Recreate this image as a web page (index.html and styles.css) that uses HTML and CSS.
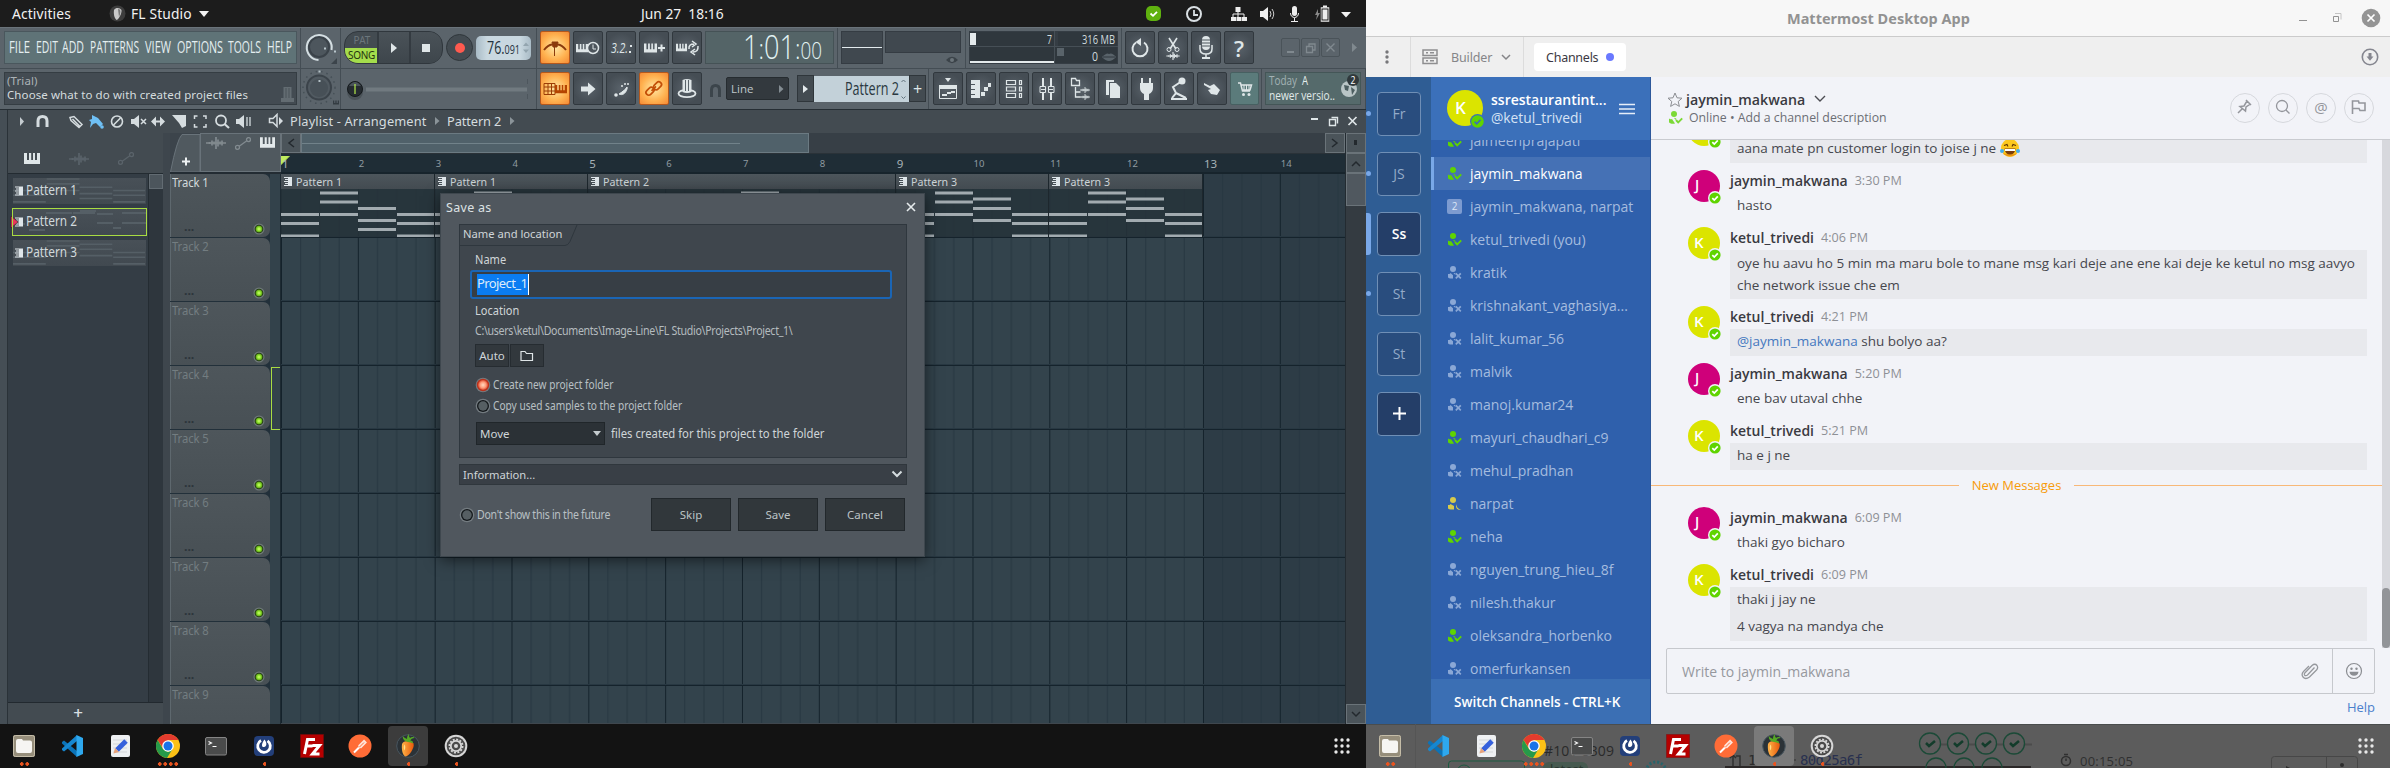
FILE: index.html
```html
<!DOCTYPE html>
<html lang="en">
<head>
<meta charset="utf-8">
<title>Desktop</title>
<link rel="stylesheet" href="styles.css">
</head>
<body>
<svg class="defs" width="0" height="0">
  <defs>
    <radialGradient id="ledGreen"><stop offset="0" stop-color="#d0ff70"/><stop offset=".55" stop-color="#8be02a"/><stop offset="1" stop-color="#4f8a16"/></radialGradient>
    <radialGradient id="ledRed"><stop offset="0" stop-color="#ffd9c2"/><stop offset=".6" stop-color="#ff9a78"/><stop offset="1" stop-color="#d8492f"/></radialGradient>
    <linearGradient id="carrot" x1="0" x2="1"><stop offset="0" stop-color="#ffb347"/><stop offset="1" stop-color="#e8590c"/></linearGradient>
    <pattern id="bars" width="76.83" height="64" patternUnits="userSpaceOnUse">
      <path d="M19.7 0v64M38.9 0v64M58.1 0v64" stroke="#263640"/>
      <path d="M.5 0v64" stroke="#14222b"/>
      <path d="M0 62.5h77" stroke="#283842"/><path d="M0 63.5h77" stroke="#15232c"/>
    </pattern>
  </defs>
  <symbol id="piano" viewBox="0 0 16 11"><path fill="currentColor" d="M0 0h3v7h2V0h2.200v7h1.800V0h2v7h2V0h3v11H0z"/></symbol>
  <symbol id="wave" viewBox="0 0 20 12"><path d="M0 6h20M3.500 5v2M6 3.500v5M8 4.500v3M10 0v12M12 2.500v7M14 4.500v3M16 3.500v5" stroke="currentColor" stroke-width="1.700" fill="none"/></symbol>
  <symbol id="auto" viewBox="0 0 16 13"><g fill="none" stroke="currentColor" stroke-width="1.300"><circle cx="2.500" cy="10.300" r="2"/><circle cx="13.500" cy="2.600" r="2"/><path d="M4.200 9.200l7.600-5.400"/></g></symbol>
  <symbol id="clipicon" viewBox="0 0 8 9"><path fill="#dfe6ea" d="M0 0h8v9H0V8h4V7H1V6h3V5H0V4h4V3H1V2h3V1H0z"/></symbol>
  <symbol id="led" viewBox="0 0 12 12"><circle cx="6" cy="6" r="5.500" fill="#6f7b78"/><circle cx="6" cy="6" r="4.300" fill="#1c2c14"/><circle cx="6" cy="6" r="3.500" fill="url(#ledGreen)"/></symbol>
  <symbol id="ledoff" viewBox="0 0 16 16"><circle cx="8" cy="8" r="7.300" fill="#737b80"/><circle cx="8" cy="8" r="6" fill="#14191c"/><circle cx="8" cy="8" r="4.700" fill="#565f63"/></symbol>
  <symbol id="ledon" viewBox="0 0 16 16"><circle cx="8" cy="8" r="7.300" fill="#737b80"/><circle cx="8" cy="8" r="6.200" fill="#b9321c"/><circle cx="8" cy="8" r="5" fill="url(#ledRed)"/></symbol>
  <symbol id="notes1" viewBox="0 0 154 49" preserveAspectRatio="none"><path fill="currentColor" d="M0 22h38v3H0zM0 31h38v3H0zM0 43.500h38v3H0zM39 .5h38v3H39zM39 9.500h38v3H39zM39 22h38v3H39zM77 16h38v3H77zM77 28h38v3H77zM77 37h38v3H77zM116 22h37v3h-37zM116 31h37v3h-37zM116 43.500h37v3h-37z"/></symbol>
  <symbol id="notes3" viewBox="0 0 154 49" preserveAspectRatio="none"><path fill="currentColor" d="M0 22h38v3H0zM0 31h38v3H0zM0 43.500h38v3H0zM39 .5h38v3H39zM39 9.500h38v3H39zM39 22h38v3H39zM77 6.500h38v3H77zM77 16h38v3H77zM77 28h38v3H77zM116 22h37v3h-37zM116 31h37v3h-37zM116 43.500h37v3h-37z"/></symbol>
  <symbol id="online" viewBox="0 0 14 13"><circle cx="5" cy="3" r="3" fill="currentColor"/><path fill="currentColor" d="M0 7.500c1 .8 2 1 3 .4l3 4.600c-2 .6-6 .2-6-1.500zM5 6.800l2.400.6-1 1.500z"/><path d="M7 9l2.200 2.300 4-4" fill="none" stroke="currentColor" stroke-width="1.900"/></symbol>
  <symbol id="offline" viewBox="0 0 14 13"><circle cx="5" cy="3" r="3" fill="currentColor"/><path fill="currentColor" d="M0 8c1.500.3 2-.3 2.500-1l2.500 2.300V12.500C2 12.600 0 12.300 0 11zM5.500 7h1.800v2z"/><path d="M7.800 7.300l5 5M12.800 7.300l-5 5" fill="none" stroke="currentColor" stroke-width="1.700"/></symbol>
  <symbol id="away" viewBox="0 0 14 13"><circle cx="5" cy="3" r="3" fill="currentColor"/><path fill="currentColor" d="M0 8c1.500.3 2-.3 2.500-1l3.500 2V12.500C2 12.600 0 12.300 0 11zM9 6.500c-1 3 .5 6 4.500 5.800-2 1-5.500.5-5.500-3z"/></symbol>
  <symbol id="okbadge" viewBox="0 0 14 14"><circle cx="7" cy="7" r="7" fill="#f2f3f8"/><circle cx="7" cy="7" r="5.600" fill="#5fd400"/><path d="M4.300 7.100l2 2 3.500-3.700" fill="none" stroke="#fff" stroke-width="1.700"/></symbol>
  <symbol id="i-files" viewBox="0 0 24 24"><rect x="1" y="1" width="22" height="22" rx="2" fill="#968e7b"/><rect x="1.500" y="1.500" width="21" height="21" rx="2" fill="none" stroke="#c5bda8"/><path fill="#f6f5f2" d="M4 7q0-2 2-2h4l1 1.500h7q2 0 2 2V17q0 2-2 2H6q-2 0-2-2z"/></symbol>
  <symbol id="i-code" viewBox="0 0 24 24"><path fill="#0b73b8" d="M2 8l2-1.500L17 17v6L2 9.500z"/><path fill="#1687d0" d="M2 16l2 1.500L17 7V1L2 14.500z"/><path fill="#2ea8ee" d="M16.500 1L23 4v16l-6.500 3z"/></symbol>
  <symbol id="i-edit" viewBox="0 0 24 24"><rect x="3" y="1" width="19" height="22" rx="2" fill="#eef0f2"/><path d="M5 6h14M5 10h14M5 14h14M5 18h14" stroke="#d3d6d9"/><path d="M9 16L18 7" stroke="#3560dc" stroke-width="5"/><path fill="#e7a27a" d="M7 14l4 4-5.500 1.500z"/></symbol>
  <symbol id="i-chrome" viewBox="0 0 24 24"><circle cx="12" cy="12" r="12" fill="#fbc116"/><path fill="#e33b2e" d="M1.600 6A12 12 0 0122.400 6H12L7 14z"/><path fill="#269a4a" d="M1.600 6A12 12 0 0011 24l5.500-9-4.500 3-5-3z"/><circle cx="12" cy="12" r="5.800" fill="#fff"/><circle cx="12" cy="12" r="4.500" fill="#1a73e8"/></symbol>
  <symbol id="i-term" viewBox="0 0 24 24"><rect x="1.500" y="3.500" width="21" height="17.500" rx="1.500" fill="#4a4b4b" stroke="#858585"/><path d="M4.500 7.500l3 1.500-3 1.500M8.500 12.500h4" fill="none" stroke="#fff" stroke-width="1.100"/></symbol>
  <symbol id="i-matter" viewBox="0 0 24 24"><rect x="2" y="2" width="20" height="20" rx="4" fill="#233f7a"/><path d="M9 6.500A6.300 6.300 0 1015.500 6.800" fill="none" stroke="#fff" stroke-width="2.800"/><path fill="#fff" d="M12.500 5.500c3 4 2 7-.5 7.500s-3-3 .5-7.500z"/></symbol>
  <symbol id="i-fz" viewBox="0 0 24 24"><rect x=".5" y=".5" width="23" height="23" fill="#b50000" stroke="#7d0a0a" stroke-dasharray="1 1"/><path d="M4.500 20L7.500 5.500H15M6 12h6.500M12.500 11.500h7l-7 8.500h7" fill="none" stroke="#fff" stroke-width="3"/></symbol>
  <symbol id="i-post" viewBox="0 0 24 24"><circle cx="12" cy="12" r="11.500" fill="#ff6c37"/><path d="M6 18.500l8-8" stroke="#fff" stroke-width="2"/><path d="M11.500 13l6-6" stroke="#ffe6dc" stroke-width="4"/><path d="M11 13.500l5-5" stroke="#ff6c37"/></symbol>
  <symbol id="i-fl" viewBox="0 0 24 24"><circle cx="12" cy="12" r="11.300" fill="#2b3237" stroke="#49565f"/><path fill="url(#carrot)" d="M6 10c1-3.500 9-4 11.500-.5 1.500 4-4.500 13-8 13C6 21 5.500 14 6 10z"/><path fill="#ffe08a" d="M8.500 10.500c1 1 1 4 0 6-1-2-1-4 0-6z"/><path fill="#56a825" d="M12 8C9 7.500 6 5 7 2c1 2 3 2 4 3 0-3 1-4 2-5-.5 2 .5 3 1 4 1.500-1.500 4-1.500 4.500 0-2 0-4 1-4 3 2-.5 2.500.5 2.500 2.500-1.500-1-3-1-5-1.500z"/></symbol>
  <symbol id="i-gear" viewBox="0 0 24 24"><circle cx="12" cy="12" r="11.300" fill="#d7d7d7"/><circle cx="12" cy="12" r="9.300" fill="#4a4a4a"/><circle cx="12" cy="12" r="6.600" fill="none" stroke="#d7d7d7" stroke-width="1.800" stroke-dasharray="2 1.450"/><circle cx="12" cy="12" r="5.200" fill="none" stroke="#d7d7d7" stroke-width="1.800"/><circle cx="12" cy="12" r="2" fill="#d7d7d7"/></symbol>
  <symbol id="i-grid" viewBox="0 0 16 16"><path d="M2 2h13M2 8h13M2 14h13" stroke="#e8e8e8" stroke-width="3.400" stroke-linecap="round" stroke-dasharray="0 6"/></symbol>
</svg>

<main class="desktop">
<section class="left">
  <header class="topbar">
    <span class="activities">Activities</span>
    <svg width="17" height="17" viewBox="0 0 17 17"><circle cx="8.500" cy="8.500" r="8" fill="#3d3d3d"/><path fill="#c9c9c9" d="M5 5c2-3 6-2 7.500 0C13 9 9 15 7.500 15 5 13 4.500 8 5 5z"/><path fill="#777" d="M9 4c3 0 3 3 1 8z"/></svg>
    <span class="app">FL Studio</span>
    <svg class="caret" width="10" height="6"><path d="M0 0h10L5 6z" fill="#f2f2f2"/></svg>
    <span class="clock">Jun 27&nbsp; 18:16</span>
    <svg class="tray" width="220" height="20" viewBox="0 0 220 20">
      <rect x="1" y="2" width="15" height="15" rx="5" fill="#5fb10f"/><path d="M5.500 9.500l2.500 2.300 4-4" fill="none" stroke="#fff" stroke-width="1.800"/>
      <circle cx="49" cy="10" r="7" fill="none" stroke="#d9dfe3" stroke-width="2"/><path d="M49 6v5h4" fill="none" stroke="#d9dfe3" stroke-width="1.800"/>
      <g fill="#eee"><path d="M90.500 3h5v5h-5zM86 13h5v4h-5zM91.500 13h5v4h-5zM97 13h5v4h-5z"/></g><path d="M93 7v6M88 13v-3h11v3" fill="none" stroke="#eee"/>
      <path fill="#eee" d="M115 7h3l5-4v14l-5-4h-3z"/><path d="M125 7q2 3 0 6M127 5q3.500 5 0 10" fill="none" stroke="#ccc"/>
      <rect x="147" y="2" width="5" height="10" rx="2.500" fill="#eee"/><path d="M145.500 9c0 6 8 6 8 0M149.500 14v3M146 17.500h7" fill="none" stroke="#eee"/>
      <path fill="#888" d="M173 5l-3 6h2l-1 5 4-7h-2z"/><rect x="176.500" y="4" width="7" height="13" fill="#eee" stroke="#eee" stroke-width="1.500"/><rect x="177" y="5" width="6" height="11" fill="none" stroke="#1d1d1d"/><path d="M178 2.500h4" stroke="#eee" stroke-width="2"/>
      <path fill="#f2f2f2" d="M196 8h10l-5 5.500z"/>
    </svg>
  </header>

  <section class="toolbar">
    <div class="trow">
      <div class="seg sA"><div class="menu"><svg width="291" height="31" font-family="Open Sans" font-size="17" fill="#e4eef0"><g transform="translate(0 21)">
        <text x="4" textLength="21" lengthAdjust="spacingAndGlyphs">FILE</text><text x="31" textLength="22" lengthAdjust="spacingAndGlyphs">EDIT</text><text x="57" textLength="22" lengthAdjust="spacingAndGlyphs">ADD</text><text x="85" textLength="49" lengthAdjust="spacingAndGlyphs">PATTERNS</text><text x="140" textLength="26" lengthAdjust="spacingAndGlyphs">VIEW</text><text x="172" textLength="46" lengthAdjust="spacingAndGlyphs">OPTIONS</text><text x="223" textLength="33" lengthAdjust="spacingAndGlyphs">TOOLS</text><text x="262" textLength="25" lengthAdjust="spacingAndGlyphs">HELP</text></g></svg></div></div>
      <div class="seg sB"><svg width="38" height="38" viewBox="0 0 38 38"><circle cx="17" cy="18" r="10" fill="#4d565d" stroke="#3a4249" stroke-width="2"/><path d="M16.500 31A12.500 12.500 0 1129.500 21" fill="none" stroke="#d4dee2" stroke-width="2"/><path d="M22 19.500h2M32 22.500h2" stroke="#b9c6cc" stroke-width="2"/><path fill="#3c444b" d="M35 29v6h-6z"/></svg></div>
      <div class="seg sC">
        <div class="transport"><div class="ps"><b>PAT</b><i>SONG</i></div><div class="tb"><svg width="8" height="12"><path d="M1 1v10l6-5z" fill="#dfe6e8"/></svg></div><div class="tb"><svg width="8" height="8"><path d="M0 0h8v8H0z" fill="#dfe6e8"/></svg></div></div>
        <div class="rec"><span></span></div>
        <div class="tempo"><svg width="54" height="24" font-family="Open Sans" fill="#24323c"><text x="11" y="18" font-size="18" textLength="33" lengthAdjust="spacingAndGlyphs">76.<tspan font-size="13">091</tspan></text><path fill="#93a5af" d="M47 10h6l-3-3.500zM47 13.500h6l-3 3.500z"/></svg></div>
      </div>
      <div class="seg sD">
        <div class="btn on"><svg width="26" height="24" viewBox="0 0 26 24"><path d="M2 14q4-5 8-5.500M24 14q-4-5-8-5.500" fill="none" stroke="#8a3a0c" stroke-width="2"/><path d="M10 6h6l-1 5h-4zM12.500 11v9" fill="#8a3a0c" stroke="#8a3a0c"/></svg></div>
        <div class="btn"><svg width="26" height="20" viewBox="0 0 26 20"><use href="#piano" x="1" y="5" width="12" height="10"/><circle cx="18" cy="10" r="5.500" fill="#4d555c" stroke="currentColor" stroke-width="1.500"/><path d="M18 6.500V11h3" fill="none" stroke="currentColor"/></svg></div>
        <div class="btn"><svg width="26" height="20" font-family="Open Sans" font-style="italic" fill="currentColor"><text x="3" y="15" font-size="15" textLength="17" lengthAdjust="spacingAndGlyphs">3.2.</text><path d="M22 7h2v2h-2zM21 13h2v2h-2z"/></svg></div>
        <div class="btn"><svg width="26" height="20" viewBox="0 0 26 20"><use href="#piano" x="3" y="5" width="13" height="10"/><path d="M17 10h7M20.500 6.500v7" stroke="currentColor" stroke-width="2"/></svg></div>
        <div class="btn"><svg width="26" height="20" viewBox="0 0 26 20"><use href="#piano" x="2" y="5" width="11" height="9"/><path d="M15 11q-.5-5 5-5M24 8q.5 6-5 6M18 3l4 3-4 3M21 11l-4 3 4 3" fill="none" stroke="currentColor" stroke-width="1.500"/></svg></div>
        <div class="time"><svg width="127" height="31" font-family="Open Sans" fill="#e2f3f3"><text x="37" y="27" font-size="33" font-weight="300" textLength="79" lengthAdjust="spacingAndGlyphs">1<tspan font-size="28">:</tspan>01<tspan font-size="28">:</tspan><tspan font-size="23">00</tspan></text></svg></div>
      </div>
      <div class="seg sE"><div class="scope"><i></i></div><div class="level"><i></i><svg width="12" height="8" viewBox="0 0 12 8"><path d="M0 4q6-6.500 12 0-6 6.500-12 0z" fill="#3b4349"/><circle cx="6" cy="4" r="2" fill="#6b747a"/></svg></div></div>
      <div class="seg sF"><svg class="cpu" width="149" height="33" font-family="Open Sans" fill="#cfdadd" font-size="12.500"><path fill="#353d44" d="M0 0h149v33H0z"/><path fill="#2f373d" d="M1 1h84v14H1zM89 1h59v14H89zM1 16h84v16H1zM85 16h63v16H85z"/><path fill="#e4eaec" d="M1 2h6v12H1zM1 30h84v2H1z"/><path d="M0 15.500h149M85.500 0v33" stroke="#464f56"/><text x="78" y="13" textLength="5" lengthAdjust="spacingAndGlyphs">7</text><text x="113" y="13" textLength="33" lengthAdjust="spacingAndGlyphs">316 MB</text><text x="123" y="30" textLength="6" lengthAdjust="spacingAndGlyphs">0</text><path fill="#59636a" d="M133 26q5-5 7-3 3-2 7 3-7 8-14 0zM88 17h7v8h-7z"/><path d="M134 26h12" stroke="#30383e"/></svg></div>
      <div class="seg sG">
        <div class="btn"><svg width="22" height="22" viewBox="0 0 22 22"><path d="M7 5.500A7.500 7.500 0 1015 5.500" fill="none" stroke="currentColor" stroke-width="2"/><path fill="currentColor" d="M12 1v8L6.500 5z"/></svg></div>
        <div class="btn"><svg width="20" height="26" viewBox="0 0 20 26"><path d="M6 3l7 11M14 3L7 14" stroke="currentColor" stroke-width="1.600"/><circle cx="6" cy="14.500" r="2" fill="none" stroke="currentColor"/><circle cx="14" cy="14.500" r="2" fill="none" stroke="currentColor"/><use href="#wave" x="3" y="17" width="14" height="8"/></svg></div>
        <div class="btn"><svg width="20" height="26" viewBox="0 0 20 26"><rect x="6" y="1" width="8" height="14" rx="4" fill="currentColor"/><path d="M6 5h8M6 8h8M6 11h8" stroke="#4d565d"/><path d="M4 10v4q0 5 6 5t6-5v-4M10 19v3" fill="none" stroke="currentColor" stroke-width="1.500"/><path fill="currentColor" d="M6 22h8v2H6z"/></svg></div>
        <div class="btn"><span class="q">?</span></div>
        <div class="wc"><i><svg width="17" height="17"><path d="M5 13h7" stroke="currentColor" stroke-width="2"/></svg></i><i><svg width="17" height="17"><path d="M4.500 7.500h6v6h-6zM7 7V5h6v6h-2" fill="none" stroke="currentColor" stroke-width="1.300"/></svg></i><i><svg width="17" height="17"><path d="M4.500 4.500l8 8M12.500 4.500l-8 8" stroke="currentColor" stroke-width="1.400"/></svg></i></div>
        <svg width="6" height="9"><path d="M0 0v9l5-4.500z" fill="#80898f"/></svg>
      </div>
    </div>
    <div class="trow">
      <div class="seg sA"><div class="hint"><span class="dim">(Trial)</span><span>Choose what to do with created project files</span><svg width="13" height="16" viewBox="0 0 13 16"><path fill="#636c72" d="M2.500 1h8v11h-8zM0 12h13v4H0z"/><path d="M5 2v10M8 2v10" stroke="#4a5359"/></svg></div></div>
      <div class="seg sB"><svg width="38" height="38" viewBox="0 0 38 38"><circle cx="17" cy="17.500" r="16" fill="none" stroke="#465057" stroke-width="1.500" stroke-dasharray="1.500 4"/><circle cx="17" cy="17.500" r="12" fill="#515a61" stroke="#3b434a" stroke-width="2"/><circle cx="17" cy="18" r="9" fill="#475057"/><path d="M16.500 11h2M16.500 1.500h2" stroke="#b5c1c7" stroke-width="2"/><use href="#piano" x="31" y="30" width="6" height="5" color="#343c42"/></svg></div>
      <div class="seg sC"><svg width="190" height="38" viewBox="0 0 190 38"><path d="M22 19.500h161" stroke="#717a80" stroke-width="4"/><path d="M183.500 9v5M183.500 24v5" stroke="#4d565d"/><circle cx="11" cy="22" r="8" fill="#4a5258"/><circle cx="11" cy="19" r="7.500" fill="#252b30" stroke="#151a1d"/><path d="M5 16q6-8 12 0z" fill="#4b545a"/><path d="M11 14v10" stroke="#b4ec4a" stroke-width="1.200"/></svg></div>
      <div class="seg sH">
        <div class="btn on"><svg width="26" height="20" viewBox="0 0 26 20"><path fill="none" stroke="#9c3d05" d="M2 4.500h11v11H2zM2 8h11M2 12h11M6 4v12M9.500 4v12"/><use href="#piano" x="13" y="4" width="12" height="12" color="#b54400"/></svg></div>
        <div class="btn"><svg width="20" height="20"><path fill="currentColor" d="M3 7.500h7V3.500l7.500 6.500L10 16.500v-4H3z"/></svg></div>
        <div class="btn"><svg width="22" height="22"><circle cx="6" cy="17" r="1.800" fill="currentColor"/><path d="M9 16c6 3 9-6 8-7-2 3-3 3-5 5z" fill="currentColor" stroke="currentColor"/><path d="M12 7v2M15 5v2M18 5v2" stroke="currentColor" stroke-width="1.500"/></svg></div>
        <div class="btn on"><svg width="22" height="22" viewBox="0 0 22 22"><g fill="none" stroke="#c34f08" stroke-width="1.700"><rect x="2.500" y="10.500" width="9" height="5.500" rx="2.700" transform="rotate(-45 7 13.250)"/><rect x="10" y="5" width="9" height="5.500" rx="2.700" transform="rotate(-45 14.500 7.750)"/><path d="M8.500 12.800l4.500-4.500"/></g></svg></div>
        <div class="btn"><svg width="22" height="22" viewBox="0 0 22 22"><ellipse cx="11" cy="15.500" rx="8.500" ry="3.700" fill="none" stroke="currentColor" stroke-width="1.800"/><path fill="currentColor" d="M6.500 2q4.500-2 9 0v12q-4.500 2-9 0z"/><path d="M9.500 2v11M12.500 2v11" stroke="#5a646b"/></svg></div>
        <svg class="snap" width="13" height="14"><path d="M2.500 13V6q0-4.500 4-4.500t4 4.500v7" fill="none" stroke="#3c454b" stroke-width="3"/></svg>
        <div class="line"><span>Line</span><svg width="5" height="8"><path d="M0 0v8l4.500-4z" fill="#848d93"/></svg></div>
        <div class="pbtn"><svg width="5" height="8"><path d="M0 0v8l5-4z" fill="#e4eaec"/></svg></div>
        <div class="pat"><svg width="95" height="26" font-family="Open Sans" fill="#2a3841"><text x="31" y="19" font-size="17.500" textLength="54" lengthAdjust="spacingAndGlyphs">Pattern 2</text><path d="M87.500 6l2-2 2 2M87.500 20.500l2 2 2-2" fill="none" stroke="#62727c"/></svg></div>
        <div class="pbtn"><span>+</span></div>
      </div>
      <div class="seg sI">
        <div class="btn"><svg width="20" height="24" viewBox="0 0 20 24"><path fill="currentColor" d="M7 1h6l-3 4z"/><path d="M1.500 8.500h17v13h-17z" fill="none" stroke="currentColor"/><path fill="currentColor" d="M1 8h18v4H1zM4 17h5v2H4zM9 15h4v2H9zM13 14h4v2h-4z"/></svg></div>
        <div class="btn"><svg width="22" height="20"><path fill="currentColor" d="M1 1h9v18H1v-3h4v-1H1v-4h4v-1H1V6h4V5H1zM11 13h4v4h-4zM14 8h4v4h-4zM18 4h3v4h-3z"/></svg></div>
        <div class="btn"><svg width="20" height="20"><path d="M2.500 1.500h9v4h-9zM2.500 8h9v4h-9zM2.500 14.500h9v4h-9zM15.500 1.500h2v4h-2zM15.500 8h2v4h-2zM15.500 14.500h2v4h-2z" fill="none" stroke="currentColor" stroke-width="1.200"/></svg></div>
        <div class="btn"><svg width="20" height="24"><path d="M6 1v8M14 1v8M6 16v7M14 16v7" stroke="currentColor" stroke-width="2"/><path d="M3 9.500h5.500v6H3zM11.500 9.500H17v6h-5.500zM4 12.500h4M12 12.500h4" fill="none" stroke="currentColor"/></svg></div>
        <div class="btn"><svg width="22" height="26"><path d="M2.500 2.500h4l1 2h3v5h-8zM6.500 11v10h5M6.500 16h5" fill="none" stroke="currentColor" stroke-width="1.300"/><use href="#wave" x="11" y="11" width="10" height="6"/><use href="#wave" x="11" y="18" width="10" height="6"/></svg></div>
        <div class="btn"><svg width="18" height="20"><path fill="currentColor" d="M2 1h8v2H5v13H2zM6 4h6l4 4v11H6z"/></svg></div>
        <div class="btn"><svg width="18" height="24"><path fill="currentColor" d="M4 1h2v5h6V1h2v5h2v5q0 4-4 6v6H7v-6q-4-2-4-6V6h1z"/></svg></div>
        <div class="btn"><svg width="22" height="24"><circle cx="14" cy="4" r="3.500" fill="currentColor"/><path d="M14 4L5 10l3 6-4 5M8 16l10 5M3 22h16" fill="none" stroke="currentColor" stroke-width="2"/></svg></div>
        <div class="btn"><svg width="20" height="18"><path fill="currentColor" d="M2 3l6 3 4-2 6 6-3 5-6-1-3-4 3-1-7-4z"/></svg></div>
        <div class="btn cart"><svg width="18" height="18"><path d="M2 3h2.500l2 8h7.500M5.500 5h10l-1.500 5H7" fill="none" stroke="currentColor" stroke-width="1.500"/><path d="M8 5v5M10.500 5v5M13 5v5" stroke="currentColor"/><circle cx="7.500" cy="14.500" r="1.500" fill="currentColor"/><circle cx="13" cy="14.500" r="1.500" fill="currentColor"/></svg></div>
      </div>
      <div class="seg sJ"><div class="news"><svg width="94" height="31" font-family="Open Sans" font-size="12"><text x="3" y="12" fill="#a3b2b4" textLength="28" lengthAdjust="spacingAndGlyphs">Today</text><text x="36" y="12" fill="#e6efef" textLength="6" lengthAdjust="spacingAndGlyphs">A</text><text x="3" y="27" fill="#e1eaea" textLength="66" lengthAdjust="spacingAndGlyphs">newer versio..</text><circle cx="83" cy="16" r="8" fill="#b9c5c6"/><path d="M78 12l5 1-1 5-3-1zM85 14l4 3-3 5z" fill="#4c5e60"/><circle cx="87" cy="7" r="6" fill="#30393c"/><text x="84.500" y="11" font-size="11" fill="#fff" textLength="5" lengthAdjust="spacingAndGlyphs">2</text></svg></div></div>
    </div>
  </section>

  <section class="playlist">
    <div class="rail"></div>
    <div class="plmain">
      <div class="pltitle">
        <svg width="250" height="22" viewBox="0 0 250 22" color="#d5dcdf"><path fill="#c5ccd0" d="M12 7v9l4-4.500z"/><path d="M30 17v-6q0-4.500 4.500-4.500T39 11v6" fill="none" stroke="currentColor" stroke-width="3"/><path d="M62 7.500l4-1 8 8-3 3-8-7zM64.500 9l7 7" fill="none" stroke="currentColor" stroke-width="1.500"/><path fill="#6fc0f5" d="M84 5l6 3 5 6-3 3-4-4-3 1-3 4 1-6-2-2 3-1z"/><circle cx="94" cy="17" r="1.800" fill="#6fc0f5"/><circle cx="109" cy="11.500" r="5.500" fill="none" stroke="currentColor" stroke-width="1.600"/><path d="M105.500 15l7-7" stroke="currentColor" stroke-width="1.600"/><path fill="currentColor" d="M123 9h3l5-4v13l-5-4h-3zM143 11.500l5-5v4h4v-4l5 5-5 5v-4h-4v4zM164 5h14v11l-4 2-3-5z"/><path d="M133 9l5 5M138 9l-5 5" stroke="currentColor" stroke-width="1.500"/><path d="M186.500 9V6h3M195 6h3v3M198 14v3h-3M189.500 17h-3v-3" fill="none" stroke="currentColor" stroke-width="1.500"/><circle cx="213" cy="10.500" r="5" fill="none" stroke="currentColor" stroke-width="1.800"/><path d="M216.500 14l4.500 4" stroke="currentColor" stroke-width="2.200"/><path fill="currentColor" d="M228 9h3l5-4v13l-5-4h-3z"/><path d="M239 7v9M242 7v9" stroke="currentColor" stroke-width="1.300"/></svg>
        <svg class="spk" width="16" height="16"><path d="M1.500 5.500H5l4-4v12l-4-4H1.500z" fill="none" stroke="#d5dcdf" stroke-width="1.500"/><path d="M11 4v8l4-4z" fill="#d5dcdf"/></svg>
        <span class="p1">Playlist - Arrangement</span><svg width="5" height="8"><path d="M0 0v8l4.500-4z" fill="#8b9499"/></svg><span class="p2">Pattern 2</span><svg width="5" height="8"><path d="M0 0v8l4.500-4z" fill="#8b9499"/></svg>
        <svg class="plwin" width="50" height="14" color="#dfe6e8"><path d="M2 5h7" stroke="currentColor" stroke-width="2"/><path d="M20.500 5.500h6v6h-6zM22.500 3.500h6v6" fill="none" stroke="currentColor" stroke-width="1.400"/><path d="M39.500 3l8 8M47.500 3l-8 8" stroke="currentColor" stroke-width="1.700"/></svg>
      </div>
      <div class="plbody">
        <div class="picker">
          <div class="pickico"><svg width="16" height="11" color="#dfe6e8"><use href="#piano"/></svg><svg width="20" height="12" color="#5a636a"><use href="#wave"/></svg><svg width="16" height="13" color="#5a636a"><use href="#auto"/></svg></div>
          <div class="picklist">
            <div class="pitems">
              <div class="pi"><svg width="133" height="26"><g color="#555f66"><use href="#notes1" width="133" height="26"/></g><use href="#clipicon" x="2" y="8" width="8" height="10"/><text x="13" y="17" textLength="51" lengthAdjust="spacingAndGlyphs">Pattern 1</text></svg></div>
              <div class="pi sel"><svg width="133" height="26"><path d="M33 4h26M60 4h22M67 2h16M84 5h16M84 14h16M109 4h24M109 14h24M100 19h8M16 21h16M0 15h12" stroke="#555f66" stroke-width="2"/><use href="#clipicon" x="2" y="8" width="8" height="10"/><text x="13" y="17" textLength="51" lengthAdjust="spacingAndGlyphs">Pattern 2</text><path d="M-2 7l7 6-7 6z" fill="#e8375a" stroke="#3a1a22" stroke-width=".6"/></svg></div>
              <div class="pi"><svg width="133" height="26"><g color="#555f66"><use href="#notes3" width="133" height="26"/></g><use href="#clipicon" x="2" y="8" width="8" height="10"/><text x="13" y="17" textLength="51" lengthAdjust="spacingAndGlyphs">Pattern 3</text></svg></div>
            </div>
            <div class="psb"><i></i></div>
          </div>
          <div class="pickadd">+</div>
        </div>
        <div class="heads">
          <div class="hcorner"><div class="hplus"><svg width="30" height="39"><path d="M.5 39Q7 6 12 1.500h18V39z" fill="#50595f" stroke="#69737a"/><path d="M12 28.500h8M16 24.500v8" stroke="#eef2f3" stroke-width="2"/></svg></div><div class="hico"><svg width="20" height="12" color="#828b90"><use href="#wave"/></svg><svg width="16" height="13" color="#828b90"><use href="#auto"/></svg><svg width="15" height="11" color="#e3e9eb"><use href="#piano"/></svg></div></div>
          <div class="tracks">
            <div class="th a"><span>Track 1</span><i>...</i><svg width="12" height="12"><use href="#led"/></svg></div>
            <div class="th"><span>Track 2</span><i>...</i><svg width="12" height="12"><use href="#led"/></svg></div>
            <div class="th"><span>Track 3</span><i>...</i><svg width="12" height="12"><use href="#led"/></svg></div>
            <div class="th s"><span>Track 4</span><i>...</i><svg width="12" height="12"><use href="#led"/></svg></div>
            <div class="th"><span>Track 5</span><i>...</i><svg width="12" height="12"><use href="#led"/></svg></div>
            <div class="th"><span>Track 6</span><i>...</i><svg width="12" height="12"><use href="#led"/></svg></div>
            <div class="th"><span>Track 7</span><i>...</i><svg width="12" height="12"><use href="#led"/></svg></div>
            <div class="th"><span>Track 8</span><i>...</i><svg width="12" height="12"><use href="#led"/></svg></div>
            <div class="th"><span>Track 9</span></div>
          </div>
        </div>
        <div class="arr">
          <div class="hs"><div class="hb"><svg width="8" height="10"><path d="M7 1L2 5l5 4" fill="none" stroke="#23292e" stroke-width="1.500"/></svg></div><div class="hthumb"><i></i></div><div class="hb r"><svg width="8" height="10"><path d="M1 1l5 4-5 4" fill="none" stroke="#23292e" stroke-width="1.500"/></svg></div></div>
          <div class="ruler"><b class="mk">1</b><span>2</span><span>3</span><span>4</span><b>5</b><span>6</span><span>7</span><span>8</span><b>9</b><span>10</span><span>11</span><span>12</span><b>13</b><span>14</span></div>
          <div class="grid">
            <svg class="gridbg" width="1064" height="549"><path fill="#33434c" d="M0 0h1064v549H0z"/><path fill="#2d3c46" d="M922 0h142v549H922z"/><path fill="url(#bars)" d="M0 0h1064v549H0z"/></svg>
            <div class="clips">
              <div class="clip"><h6><svg width="8" height="9"><use href="#clipicon"/></svg><svg width="48" height="14"><text x="0" y="11" textLength="46" lengthAdjust="spacingAndGlyphs">Pattern 1</text></svg></h6><svg class="notes" width="154" height="49"><use href="#notes1"/></svg></div>
              <div class="clip"><h6><svg width="8" height="9"><use href="#clipicon"/></svg><svg width="48" height="14"><text x="0" y="11" textLength="46" lengthAdjust="spacingAndGlyphs">Pattern 1</text></svg></h6><svg class="notes" width="154" height="49"><use href="#notes1"/></svg></div>
              <div class="clip wide"><h6><svg width="8" height="9"><use href="#clipicon"/></svg><svg width="48" height="14"><text x="0" y="11" textLength="46" lengthAdjust="spacingAndGlyphs">Pattern 2</text></svg></h6><svg class="notes" width="307" height="49"><path fill="currentColor" d="M153 .5h38v3h-38z"/></svg></div>
              <div class="clip"><h6><svg width="8" height="9"><use href="#clipicon"/></svg><svg width="48" height="14"><text x="0" y="11" textLength="46" lengthAdjust="spacingAndGlyphs">Pattern 3</text></svg></h6><svg class="notes" width="154" height="49"><use href="#notes3"/></svg></div>
              <div class="clip"><h6><svg width="8" height="9"><use href="#clipicon"/></svg><svg width="48" height="14"><text x="0" y="11" textLength="46" lengthAdjust="spacingAndGlyphs">Pattern 3</text></svg></h6><svg class="notes" width="154" height="49"><use href="#notes3"/></svg></div>
            </div>
          </div>
        </div>
        <div class="vs"><div class="vb"><svg width="4" height="6"><path d="M0 0h3v5H0z" fill="#23292e"/></svg></div><div class="vb"><svg width="10" height="7"><path d="M1 6l4-4 4 4" fill="none" stroke="#23292e" stroke-width="1.500"/></svg></div><div class="vthumb"></div><div class="vtrack"></div><div class="vb"><svg width="10" height="7"><path d="M1 1l4 4 4-4" fill="none" stroke="#23292e" stroke-width="1.500"/></svg></div></div>
      </div>
    </div>
  </section>

  <footer class="dock">
    <div class="d n2"><svg><use href="#i-files"/></svg></div><div class="d"><svg><use href="#i-code"/></svg></div><div class="d"><svg><use href="#i-edit"/></svg></div><div class="d n4"><svg><use href="#i-chrome"/></svg></div><div class="d"><svg><use href="#i-term"/></svg></div><div class="d n1"><svg><use href="#i-matter"/></svg></div><div class="d"><svg><use href="#i-fz"/></svg></div><div class="d"><svg><use href="#i-post"/></svg></div><div class="d n1 cur"><svg><use href="#i-fl"/></svg></div><div class="d n1"><svg><use href="#i-gear"/></svg></div>
    <svg class="apps" width="16" height="16"><use href="#i-grid"/></svg>
  </footer>

  <section class="dialog">
    <div class="dhead"><span>Save as</span><svg width="10" height="10"><path d="M1 1l8 8M9 1L1 9" stroke="#e6ebed" stroke-width="1.600"/></svg></div>
    <div class="panel">
      <div class="ptab"><svg width="118" height="21"><path d="M0 20.500h105q3 0 5-4L117 0" fill="none" stroke="#2f373e"/></svg><span>Name and location</span></div>
      <div class="lbl">Name</div>
      <div class="field"><span>Project_1</span></div>
      <div class="lbl loc">Location</div>
      <div class="path">C:\users\ketul\Documents\Image-Line\FL Studio\Projects\Project_1\</div>
      <div class="abtns"><div>Auto</div><div><svg width="14" height="12"><path d="M1 1.500h4l1.500 2h6v7H1z" fill="none" stroke="#dfe5e7" stroke-width="1.200"/></svg></div></div>
      <div class="opt"><svg width="16" height="16"><use href="#ledon"/></svg><span>Create new project folder</span></div>
      <div class="opt"><svg width="16" height="16"><use href="#ledoff"/></svg><span>Copy used samples to the project folder</span></div>
      <div class="mv"><div class="drop"><span>Move</span><svg width="8" height="5"><path d="M0 0h8L4 5z" fill="#c4cbce"/></svg></div><span class="mt">files created for this project to the folder</span></div>
    </div>
    <div class="info"><span>Information...</span><svg width="12" height="8"><path d="M1.500 1.500L6 6l4.500-4.500" fill="none" stroke="#d5dcdf" stroke-width="2"/></svg></div>
    <div class="dfoot"><svg width="16" height="16"><use href="#ledoff"/></svg><span>Don't show this in the future</span><div class="db">Skip</div><div class="db">Save</div><div class="db">Cancel</div></div>
  </section>
</section>

<section class="right">
  <header class="mtitle"><span>Mattermost Desktop App</span><svg width="86" height="22"><path d="M2 13.500h8" stroke="#929292"/><path d="M36.500 9.500h5v5h-5z" fill="none" stroke="#929292"/><path d="M38 6.500h6v6" fill="none" stroke="#c4c4c4"/><circle cx="74" cy="11" r="9.300" fill="#949494"/><path d="M70.500 7.500l7 7M77.500 7.500l-7 7" stroke="#fff" stroke-width="1.700"/></svg></header>
  <div class="tabs">
    <div class="dots"><svg width="4" height="14"><circle cx="2" cy="2" r="1.700"/><circle cx="2" cy="7" r="1.700"/><circle cx="2" cy="12" r="1.700"/></svg></div>
    <div class="server"><svg width="16" height="16"><path d="M1 1h14v5.500H1zM1 9h14v5.500H1zM4 3.700h2M8 3.700h4M4 11.700h2M8 11.700h4" fill="none" stroke="#8e8e90" stroke-width="1.500"/></svg><span>Builder</span><svg width="10" height="7"><path d="M1 1l4 4 4-4" fill="none" stroke="#858588" stroke-width="1.500"/></svg></div>
    <div class="tab"><span>Channels</span><i></i></div>
    <svg class="dl" width="18" height="18"><circle cx="9" cy="9" r="7.700" fill="none" stroke="#85868f" stroke-width="1.600"/><path d="M9 5v4.500" stroke="#85868f" stroke-width="3"/><path d="M5.500 8.500h7L9 12.700z" fill="#85868f"/></svg>
  </div>
  <div class="mbody">
    <nav class="teams"><div class="tm dot">Fr</div><div class="tm dot">JS</div><div class="tm cur">Ss</div><div class="tm dot">St</div><div class="tm">St</div><div class="tm add"><svg width="13" height="13"><path d="M0 6.500h13M6.500 0v13" stroke="#fff" stroke-width="2"/></svg></div></nav>
    <aside class="side">
      <div class="sh"><div class="av big"><span class="ava k">K</span><svg class="bd" width="15" height="15" viewBox="0 0 14 14"><circle cx="7" cy="7" r="7" fill="#3b6fba"/><circle cx="7" cy="7" r="5.800" fill="#5fd400"/><path d="M4.300 7.100l2 2 3.500-3.700" fill="none" stroke="#3b6fba" stroke-width="1.600"/></svg></div><div class="who"><b>ssrestaurantint...</b><span>@ketul_trivedi</span></div><svg width="16" height="12"><path d="M0 1.500h16M0 6h16M0 10.500h16" stroke="#e6eef9" stroke-width="1.700"/></svg></div>
      <div class="chs">
        <div class="ch on"><svg><use href="#online"/></svg>jaimeenprajapati</div>
        <div class="ch on open"><svg><use href="#online"/></svg>jaymin_makwana</div>
        <div class="ch"><em>2</em>jaymin_makwana, narpat</div>
        <div class="ch on"><svg><use href="#online"/></svg>ketul_trivedi (you)</div>
        <div class="ch"><svg><use href="#offline"/></svg>kratik</div>
        <div class="ch"><svg><use href="#offline"/></svg>krishnakant_vaghasiya...</div>
        <div class="ch"><svg><use href="#offline"/></svg>lalit_kumar_56</div>
        <div class="ch"><svg><use href="#offline"/></svg>malvik</div>
        <div class="ch"><svg><use href="#offline"/></svg>manoj.kumar24</div>
        <div class="ch on"><svg><use href="#online"/></svg>mayuri_chaudhari_c9</div>
        <div class="ch"><svg><use href="#offline"/></svg>mehul_pradhan</div>
        <div class="ch aw"><svg><use href="#away"/></svg>narpat</div>
        <div class="ch on"><svg><use href="#online"/></svg>neha</div>
        <div class="ch"><svg><use href="#offline"/></svg>nguyen_trung_hieu_8f</div>
        <div class="ch"><svg><use href="#offline"/></svg>nilesh.thakur</div>
        <div class="ch on"><svg><use href="#online"/></svg>oleksandra_horbenko</div>
        <div class="ch"><svg><use href="#offline"/></svg>omerfurkansen</div>
      </div>
      <div class="sw">Switch Channels - CTRL+K</div>
    </aside>
    <section class="center">
      <div class="chead">
        <div class="cinfo">
          <div class="c1"><svg width="16" height="15"><path d="M8 1l2 4.800 5 .4-3.800 3.300 1.200 4.900L8 11.800l-4.400 2.600 1.200-4.900L1 6.200l5-.4z" fill="none" stroke="#8b8d92"/></svg><b>jaymin_makwana</b><svg width="12" height="8"><path d="M1 1l5 5 5-5" fill="none" stroke="#4b4c52" stroke-width="1.400"/></svg></div>
          <div class="c2"><svg width="14" height="13"><use href="#online"/></svg><span>Online • Add a channel description</span></div>
        </div>
        <div class="circ"><svg width="16" height="16"><path d="M9 1l5 5M10 2L7 7l-4 .5L8.500 12l.5-4 4.500-3M5 10l-4 4" fill="none" stroke="currentColor" stroke-width="1.500"/></svg></div>
        <div class="circ"><svg width="16" height="16"><circle cx="7" cy="7" r="5.500" fill="none" stroke="currentColor" stroke-width="1.300"/><path d="M11 11l3.500 3.500" stroke="currentColor" stroke-width="1.300"/></svg></div>
        <div class="circ"><span>@</span></div>
        <div class="circ"><svg width="16" height="16"><path d="M1.500 15V2h6l.5 2h6v7.500H9l-1-2H1.500" fill="none" stroke="currentColor" stroke-width="1.600"/></svg></div>
      </div>
      <div class="scroll">
        <div class="feed">
          <div class="msg first"><div class="av"><span class="ava k">K</span><svg class="bd" width="14" height="14"><use href="#okbadge"/></svg></div><div class="mc"><p class="own">aana mate pn customer login to joise j ne <svg class="emoji" width="20" height="20" viewBox="0 0 20 20"><circle cx="10" cy="10" r="9" fill="#fdc81f"/><path d="M3 15a9 9 0 0014 0q-7 3-14 0z" fill="#ef9411"/><path d="M4.500 10.500h11q-.5 6-5.500 6t-5.500-6z" fill="#7a3d0c"/><path d="M5 11h10v2H5z" fill="#fff"/><path d="M4 7.500l3-1 1 2M16 7.500l-3-1-1 2" fill="none" stroke="#5f3507" stroke-width="1.100"/><circle cx="2" cy="13" r="2" fill="#42aef0"/><circle cx="18" cy="13" r="2" fill="#42aef0"/></svg></p></div></div>
          <div class="msg"><div class="av"><span class="ava j">J</span><svg class="bd" width="14" height="14"><use href="#okbadge"/></svg></div><div class="mc"><div class="nm"><b>jaymin_makwana</b><time>3:30 PM</time></div><p>hasto</p></div></div>
          <div class="msg"><div class="av"><span class="ava k">K</span><svg class="bd" width="14" height="14"><use href="#okbadge"/></svg></div><div class="mc"><div class="nm"><b>ketul_trivedi</b><time>4:06 PM</time></div><p class="own two">oye hu aavu ho 5 min ma maru bole to mane msg kari deje ane ene kai deje ke ketul no msg aavyo<br>che network issue che em</p></div></div>
          <div class="msg"><div class="av"><span class="ava k">K</span><svg class="bd" width="14" height="14"><use href="#okbadge"/></svg></div><div class="mc"><div class="nm"><b>ketul_trivedi</b><time>4:21 PM</time></div><p class="own"><a>@jaymin_makwana</a> shu bolyo aa?</p></div></div>
          <div class="msg"><div class="av"><span class="ava j">J</span><svg class="bd" width="14" height="14"><use href="#okbadge"/></svg></div><div class="mc"><div class="nm"><b>jaymin_makwana</b><time>5:20 PM</time></div><p>ene bav utaval chhe</p></div></div>
          <div class="msg"><div class="av"><span class="ava k">K</span><svg class="bd" width="14" height="14"><use href="#okbadge"/></svg></div><div class="mc"><div class="nm"><b>ketul_trivedi</b><time>5:21 PM</time></div><p class="own">ha e j ne</p></div></div>
          <div class="newm"><span>New Messages</span></div>
          <div class="msg"><div class="av"><span class="ava j">J</span><svg class="bd" width="14" height="14"><use href="#okbadge"/></svg></div><div class="mc"><div class="nm"><b>jaymin_makwana</b><time>6:09 PM</time></div><p>thaki gyo bicharo</p></div></div>
          <div class="msg"><div class="av"><span class="ava k">K</span><svg class="bd" width="14" height="14"><use href="#okbadge"/></svg></div><div class="mc"><div class="nm"><b>ketul_trivedi</b><time>6:09 PM</time></div><p class="own">thaki j jay ne</p><p class="own">4 vagya na mandya che</p></div></div>
        </div>
        <div class="sbar"><i></i></div>
      </div>
      <div class="write"><span>Write to jaymin_makwana</span><div class="clipb"><svg width="18" height="18"><path d="M13.500 5.500L6.500 13q-2 1.500-3-.2-.5-1 .5-2L11 3.500q3-2.500 5 0 1.500 2.300-.5 4.500L8.500 15q-4 3-6.500 0-2-3 .5-5.500L8 4" fill="none" stroke="#96989d" stroke-width="1.300"/></svg></div><div class="smile"><svg width="18" height="18"><circle cx="9" cy="9" r="7.500" fill="none" stroke="#8b8d92" stroke-width="1.200"/><circle cx="6.500" cy="6.800" r="1.200" fill="#8b8d92"/><circle cx="11.500" cy="6.800" r="1.200" fill="#8b8d92"/><path d="M4.500 9.800h9q-.5 4-4.500 4t-4.500-4z" fill="#8b8d92"/></svg></div></div>
      <div class="help">Help</div>
    </section>
  </div>
  <footer class="dock light">
    <svg class="under" width="1024" height="44">
      <path d="M0 .5h1024" stroke="#4a4d4d"/><path d="M49.500 0v44" stroke="#555"/>
      <text x="178" y="32" font-size="14" fill="#2a2a2a" textLength="70">#101 8309</text>
      <rect x="82.500" y="37" width="76" height="20" rx="3" fill="none" stroke="#1c5a40"/><circle cx="98" cy="48" r="7" fill="none" stroke="#1c5a40"/><rect x="177" y="38" width="45" height="20" rx="6" fill="#475a50"/><text x="184" y="50" font-size="13" fill="#26332c">latest</text><circle cx="290" cy="48" r="10" fill="none" stroke="#27646b" stroke-width="3" stroke-dasharray="2 2"/>
      <path d="M367 42V32M364 34l3-3 3 3M374 44V32h-4" fill="none" stroke="#303030" stroke-width="1.500"/><text x="382" y="41" font-size="14" font-family="DejaVu Sans Mono" fill="#2c2c2c" textLength="32">1633</text><path d="M416 36h14" stroke="#333"/><circle cx="423" cy="36" r="3" fill="#5c5c5c" stroke="#333"/><text x="434" y="41" font-size="14" font-family="DejaVu Sans Mono" fill="#28304f" textLength="63">80d25a6f</text>
      <path fill="#2b2828" d="M359 42h306v2H359z"/>
      <path d="M564 20.500h102" stroke="#4b4b4b" stroke-width="2"/><g fill="#5c5c5c" stroke="#1b4a37" stroke-width="1.300"><circle cx="564" cy="19.500" r="10.500"/><circle cx="592" cy="19.500" r="10.500"/><circle cx="620" cy="19.500" r="10.500"/><circle cx="648" cy="19.500" r="10.500"/><path d="M560 44a10 10 0 0120 0M588 44a10 10 0 0120 0M616 44a10 10 0 0120 0" fill="none"/></g><path d="M560 19l3 3 6-5M588 19l3 3 6-5M616 19l3 3 6-5M644 19l3 3 6-5" fill="none" stroke="#133c2b" stroke-width="2.500"/>
      <circle cx="700" cy="37" r="4.500" fill="none" stroke="#303030" stroke-width="1.500"/><path d="M700 34.500V37M698 30.500h4" stroke="#303030" stroke-width="1.500"/><text x="714" y="42" font-size="13" fill="#303030" textLength="53">00:15:05</text>
      <rect x="905.500" y="32.500" width="86" height="30" rx="3" fill="none" stroke="#474747"/><path d="M960.500 33v11" stroke="#474747"/><circle cx="976" cy="41" r="2" fill="#2d2d2d"/><path fill="#2d2d2d" d="M920 42v2h4z"/>
    </svg>
    <div class="d n2"><svg><use href="#i-files"/></svg></div><div class="d"><svg><use href="#i-code"/></svg></div><div class="d"><svg><use href="#i-edit"/></svg></div><div class="d n4"><svg><use href="#i-chrome"/></svg></div><div class="d"><svg><use href="#i-term"/></svg></div><div class="d n1"><svg><use href="#i-matter"/></svg></div><div class="d"><svg><use href="#i-fz"/></svg></div><div class="d"><svg><use href="#i-post"/></svg></div><div class="d n1 cur"><svg><use href="#i-fl"/></svg></div><div class="d n1"><svg><use href="#i-gear"/></svg></div>
    <svg class="apps" width="16" height="16"><use href="#i-grid"/></svg>
  </footer>
</section>
</main>
</body>
</html>
```

FILE: styles.css
```css
* { box-sizing: border-box; margin: 0; padding: 0; }
body { font-family: "Open Sans", "Noto Sans", sans-serif; font-size: 13px; width: 2390px; height: 768px; overflow: hidden; background: #141414; }
svg { display: block; flex: none; }
.defs { position: absolute; }
i, em { font-style: normal; }
.desktop { display: flex; width: 2390px; height: 768px; }
.left { width: 1366px; height: 768px; display: flex; flex-direction: column; position: relative; }
.right { width: 1024px; height: 768px; display: flex; flex-direction: column; background: #f2f3f8; }

/* GNOME top bar */
.topbar { height: 27px; background: #1c1c1c; color: #f2f2f2; display: flex; align-items: center; white-space: nowrap; font-family: "Noto Sans", sans-serif; font-size: 13.800px; }
.activities { width: 109px; padding-left: 12px; letter-spacing: .15px; }
.app { width: 63px; margin-left: 5px; letter-spacing: .15px; }
.caret { margin-left: 5px; }
.clock { margin-left: 432px; width: 90px; }
.tray { margin-left: auto; margin-right: 1px; }

/* FL Studio toolbar */
.toolbar { height: 83px; background: #5b646b; border-bottom: 1px solid #262e34; border-top: 1px solid #6a737a; }
.trow { display: flex; height: 41px; border-bottom: 1px solid #444d54; }
.trow + .trow { height: 40px; border-bottom: 0; }
.seg { display: flex; align-items: center; border-right: 1px solid #444d54; height: 100%; padding-bottom: 1px; }
.sA { width: 301px; padding-left: 4px; } .sB { width: 40px; padding-left: 1px; } .sC { width: 196px; padding-left: 3px; }
.sD { width: 301px; padding-left: 3px; } .sE { width: 128px; padding-left: 3px; } .sF { width: 156px; padding-left: 3px; }
.sG { width: 243px; padding-left: 3px; border-right: 0; } .sH { width: 392px; padding-left: 3px; } .sI { width: 333px; padding-left: 4px; } .sJ { width: 104px; padding-left: 3px; }
.menu { width: 293px; height: 33px; background: #5f7377; border: 1px solid #4a575d; }
.hint { width: 293px; height: 33px; background: #434b52; border: 1px solid #353d43; position: relative; color: #d5dcde; font-size: 11.500px; line-height: 14px; padding: 1px 2px; font-family: "Noto Sans"; white-space: nowrap; letter-spacing: .1px; }
.hint span { display: block; } .hint .dim { color: #aab2b6; }
.hint svg { position: absolute; right: 2px; bottom: 2px; }
.transport { display: flex; width: 99px; height: 33px; border: 1px solid #30373d; border-radius: 14px; background: #434b51; overflow: hidden; }
.ps { width: 32px; display: flex; flex-direction: column; text-align: center; }
.ps b { height: 16px; font: 10px/16px "Noto Sans"; color: #6c767c; padding-left: 2px; }
.ps i { height: 15px; font: 10px/14px "Noto Sans"; background: #a4dd4c; color: #26330f; padding-left: 1px; letter-spacing: -.3px; }
.tb { width: 32px; border-left: 2px solid #343b41; display: flex; align-items: center; justify-content: center; background: linear-gradient(#4a5258, #3e464c); }
.rec { width: 27px; height: 27px; border-radius: 50%; margin-left: 3px; background: #434b51; border: 1px solid #2f363b; display: flex; align-items: center; justify-content: center; }
.rec span { width: 10px; height: 10px; border-radius: 50%; background: #ff5a4f; }
.tempo { width: 55px; height: 24px; margin-left: 3px; border-radius: 5px; background: linear-gradient(90deg, #a9bbc6, #c9d8e0 20%, #c9d8e0 80%, #a9bbc6); }
.btn { width: 30px; height: 33px; margin-right: 3px; border: 1px solid #31383e; border-radius: 2px; background: radial-gradient(circle, #59626a, #454d54 70%); color: #dfe6e8; display: flex; align-items: center; justify-content: center; flex: none; }
.btn.on { background: radial-gradient(circle, #ffe8a6, #ffb14f 60%, #f58a35); border-color: #b5581c; }
.btn.cart { background: #5b7b7b; border-color: #476061; margin-right: 0; width: 29px; }
.time { width: 129px; height: 33px; background: #546467; border: 1px solid #455256; }
.scope { width: 42px; height: 33px; background: #40484f; border: 1px solid #353c43; display: flex; align-items: center; }
.scope i { height: 1px; width: 40px; background: #e3ebee; }
.level { width: 76px; height: 33px; margin-left: 2px; display: flex; flex-direction: column; align-items: flex-end; }
.level i { width: 76px; height: 22px; background: #40484f; border: 1px solid #353c43; }
.level svg { margin: 3px 3px 0 0; }
.q { font: 600 22px "Open Sans"; }
.wc { display: flex; gap: 1px; margin-left: 24px; margin-right: 12px; color: #80898f; }
.wc i { width: 19px; height: 19px; border: 1px solid #4a5359; border-radius: 2px; }
.snap { margin: 4px 4px 0 4px; }
.line { width: 63px; height: 23px; background: #33393e; border: 1px solid #262c30; border-radius: 2px; display: flex; align-items: center; justify-content: space-between; padding: 0 4px; color: #bfc7cb; font-size: 11.500px; margin-right: 8px; }
.pbtn { width: 17px; height: 27px; background: #434b51; border: 1px solid #2f363b; display: flex; align-items: center; justify-content: center; color: #dfe6e8; font-size: 16px; }
.pat { width: 95px; height: 26px; background: #c3d1d9; }
.news { width: 96px; height: 33px; background: #556a6b; border: 1px solid #445657; }

/* Playlist window */
.playlist { height: 614px; display: flex; background: #3f474e; }
.rail { width: 8px; background: #454e55; border-right: 1px solid #2a3238; }
.plmain { flex: 1; display: flex; flex-direction: column; }
.pltitle { height: 23px; background: #434b51; display: flex; align-items: center; color: #d5dcdf; font-family: "Noto Sans"; font-size: 12.800px; white-space: nowrap; padding-bottom: 1px; }
.pltitle .spk { margin-left: 10px; }
.p1 { margin-left: 6px; width: 139px; margin-right: 6px; letter-spacing: .15px; } .p2 { margin-left: 7px; width: 57px; margin-right: 6px; letter-spacing: -.1px; }
.plwin { margin-left: auto; margin-right: 7px; }
.plbody { display: flex; height: 591px; }
.picker { width: 155px; display: flex; flex-direction: column; }
.pickico { height: 41px; display: flex; align-items: center; padding: 11px 0 0 16px; gap: 29px; border-bottom: 1px solid #232b31; background: #434b51; }
.picklist { height: 529px; display: flex; background: #343d45; border-bottom: 1px solid #22292f; }
.pitems { width: 141px; padding: 4px 0 0 5px; border-right: 1px solid #242c32; }
.pi { width: 133px; height: 26px; background: linear-gradient(#485057, #414950); margin-bottom: 5px; }
.pi svg { overflow: visible; }
.pi.sel { outline: 1px solid #a9dc42; }
.pi text { font-family: "Noto Sans"; font-size: 13.500px; fill: #d2d9dc; }
.psb { width: 14px; background: #2e363d; } .psb i { display: block; height: 15px; background: #4c555c; border: 1px solid #626b72; }
.pickadd { flex: 1; text-align: center; padding-right: 15px; color: #d7dde0; font: 600 17px/20px "Open Sans"; background: #434b51; }
.heads { width: 118px; padding-left: 7px; background: #3e464d; }
.hcorner { height: 41px; display: flex; align-items: flex-end; background: #3c444b; border-bottom: 2px solid #232c33; }
.hplus { width: 30px; }
.hico { width: 81px; height: 39px; background: #50595f; border: 1px solid #69737a; display: flex; align-items: flex-start; justify-content: space-between; padding: 3px 5px; }
.tracks { height: 550px; overflow: hidden; border-right: 1px solid #1d2a32; background: linear-gradient(90deg, #22303a 100px, #33424b 100px); }
.th { width: 100px; height: 63px; margin-bottom: 1px; background: linear-gradient(#4e565b, #485055); border-radius: 0 7px 7px 0; position: relative; border-left: 1px solid #5e686e; color: #737d81; font: 12.500px/17px "Noto Sans"; letter-spacing: -.1px; padding-left: 1px; }
.th.a { color: #d3dadc; }
.th span { display: inline-block; transform: scaleX(.9); transform-origin: 0 0; }
.th i { position: absolute; left: 13px; bottom: 2px; color: #2c353b; font-weight: 700; }
.th svg { position: absolute; right: 5px; bottom: 2px; }
.th.s::after { content: ""; position: absolute; left: 100px; top: 1px; width: 9px; height: 61px; border: 1px solid #a9dc42; }
.arr { width: 1064px; display: flex; flex-direction: column; }
.hs { height: 21px; background: #373f46; display: flex; border-bottom: 1px solid #2a3238; }
.hb { width: 20px; background: #4b545a; border: 1px solid #6a7379; display: flex; align-items: center; justify-content: center; } .hb.r { margin-left: auto; }
.hthumb { width: 508px; background: #50616a; border: 1px solid #6b7a82; display: flex; align-items: center; }
.hthumb i { width: 438px; height: 1px; background: #71828a; }
.ruler { height: 20px; background: #1f2d36; display: flex; overflow: hidden; color: #8f9ba1; font: 9.500px/20px "Noto Sans"; border-bottom: 2px solid #17242c; }
.ruler span, .ruler b { width: 76.830px; flex: none; padding-left: 1px; } .ruler b { font: 11.500px/20px "Noto Sans"; color: #a7b2b7; }
.ruler .mk { background: linear-gradient(135deg, #c0ec60 5px, #a9da4c 6px, transparent 7px) no-repeat 0 2px / 9px 10px; }
.grid { height: 550px; position: relative; overflow: hidden; }
.gridbg { position: absolute; left: 0; top: 0; }
.clips { position: relative; display: flex; height: 63px; width: 922px; }
.clip { width: 153.700px; background: rgba(38, 50, 58, .85); color: #a2abb0; overflow: hidden; border-right: 1px solid #1d272d; flex: none; } .clip.wide { width: 307.300px; }
.clip h6 { height: 15px; background: linear-gradient(#4d565c, #434b51); display: flex; align-items: center; gap: 4px; padding-left: 3px; }
.clip text { font: 11.500px "Noto Sans"; fill: #cdd4d7; }
.notes { margin-top: 2px; }
.vs { width: 21px; display: flex; flex-direction: column; border-left: 1px solid #232b31; }
.vb { height: 20px; background: #4b545a; border: 1px solid #6a7379; display: flex; align-items: center; justify-content: center; }
.vthumb { height: 33px; background: #50585f; border: 1px solid #6a7379; } .vtrack { flex: 1; background: #343b41; }

/* Dock */
.dock { height: 44px; background: #131313; display: flex; position: relative; flex: none; align-items: flex-start; }
.d { width: 40px; height: 40px; margin: 2px 4px; border-radius: 4px; position: relative; padding: 8px; }
.d svg { width: 24px; height: 24px; }
.d.cur { background: #3c3c3c; }
.d.n1::after, .d.n2::after, .d.n4::after { content: ""; position: absolute; bottom: 0; left: 18px; width: 4px; height: 4px; background: radial-gradient(circle, #e95420 1.600px, transparent 2px) 0 0 / 5.500px 4px; }
.d.n2::after { left: 15px; width: 11px; } .d.n4::after { left: 9px; width: 22px; }
.apps { margin: 14px 16px 0 auto; }
.dock.light { background: #5c5c5c; } .dock.light .d.cur { background: #7a7a7a; }
.under { position: absolute; left: 0; top: 0; font-family: "Open Sans"; }

/* Save dialog */
.dialog { position: absolute; left: 440px; top: 193px; width: 485px; height: 364px; background: #50575e; border: 1px solid #3e474e; color: #cfd5d8; box-shadow: 0 3px 14px rgba(0,0,0,.55); font-family: "Noto Sans"; font-size: 12px; white-space: nowrap; }
.dhead { height: 30px; display: flex; justify-content: space-between; align-items: center; padding: 0 8px 4px 5px; font-size: 12.500px; letter-spacing: .3px; color: #dde2e4; }
.panel { margin-left: 18px; width: 448px; height: 234px; background: #3f464d; border: 1px solid #2f373e; padding-left: 15px; }
.ptab { height: 21px; margin-left: -15px; position: relative; padding-left: 3px; line-height: 18px; font-size: 11.200px; } .ptab svg { position: absolute; left: 0; top: 0; }
.lbl { margin-top: 5px; line-height: 18px; font-size: 12px; transform: scaleX(.92); transform-origin: 0 0; }
.field { margin-left: -5px; margin-top: 1px; width: 422px; height: 29px; border: 2px solid #1a65b5; border-radius: 3px; background: #373e45; padding: 2px 5px; font-size: 13px; }
.field span { display: inline-block; height: 21px; line-height: 19px; background: #0a7cf2; color: #dcebfb; border-right: 1px solid #fff; width: 52px; letter-spacing: -.6px; }
.loc { margin-top: 3px; } .path { width: 370px; line-height: 18px; margin-top: 2px; font-size: 12px; color: #b4bbbf; letter-spacing: -.35px; transform: scaleX(.885); transform-origin: 0 0; }
.abtns { display: flex; gap: 1px; margin-top: 4px; height: 23px; } .abtns div { width: 34px; background: #32383d; border: 1px solid #262c31; display: flex; align-items: center; justify-content: center; font-size: 11.500px; }
.opt { display: flex; align-items: center; gap: 2px; height: 21px; color: #b9c0c4; font-size: 12px; } .abtns + .opt { margin-top: 7px; }
.opt span { transform: scaleX(.845); transform-origin: 0 0; }
.mv { display: flex; align-items: center; margin-top: 6px; padding-left: 1px; }
.mv .drop { width: 129px; height: 23px; background: #2b3136; border: 1px solid #20262a; display: flex; align-items: center; justify-content: space-between; padding: 0 3px; margin-right: 6px; font-size: 11.500px; }
.mt { transform: scaleX(.94); transform-origin: 0 0; }
.info { margin: 6px 0 0 18px; width: 448px; height: 21px; background: #393f46; border: 1px solid #30373d; display: flex; align-items: center; justify-content: space-between; padding: 0 3px 1px; font-size: 11.200px; }
.dfoot { display: flex; align-items: center; margin: 13px 0 0 18px; } .dfoot span { margin-left: 2px; margin-right: 0; width: 174px; font-size: 12px; color: #b9c0c4; letter-spacing: -.3px; }
.dfoot span { transform: scaleX(.88); transform-origin: 0 0; }
.db { width: 80px; height: 33px; background: #31373b; border: 1px solid #22282c; display: flex; align-items: center; justify-content: center; margin-right: 7px; font-size: 11.500px; color: #bcc3c6; }

/* Mattermost */
.mtitle { height: 37px; background: #f7f7f7; border-bottom: 1px solid #cbcbcb; display: flex; align-items: center; padding-left: 421px; color: #929292; font: 700 14.500px "Noto Sans"; }
.mtitle svg { margin-left: auto; margin-right: 7px; } .mtitle span { width: 182px; white-space: nowrap; }
.tabs { height: 40px; background: #efefef; display: flex; align-items: center; color: #858588; flex: none; }
.dots { width: 45px; height: 40px; display: flex; align-items: center; padding-left: 19px; border-right: 1px solid #dcdcdc; fill: #77777a; }
.server { width: 113px; height: 40px; display: flex; align-items: center; padding-left: 11px; border-right: 1px solid #dcdcdc; } .server span { margin: 0 9px 0 13px; width: 41px; font-size: 12.500px; }
.server span, .tab span { font-size: 12.500px; letter-spacing: -.15px; font-family: "Noto Sans"; }
.tab { margin-left: 10px; width: 92px; height: 28px; background: #fff; border-radius: 4px; display: flex; align-items: center; padding-left: 12px; color: #3b3842; } .tab span { width: 60px; letter-spacing: -.25px; } .tab i { width: 8px; height: 8px; border-radius: 50%; background: #6a79ff; }
.dl { margin-left: auto; margin-right: 11px; }
.mbody { display: flex; height: 647px; }
.teams { width: 65px; background: #2f5d94; padding: 15px 0 0 11px; }
.tm { width: 44px; height: 44px; margin-bottom: 16px; background: #294d7e; border: 1px solid #6f8fb6; border-radius: 4px; color: #94abc9; display: flex; align-items: center; justify-content: center; position: relative; font-size: 14px; padding-bottom: 1px; }
.tm.cur { color: #fff; font-weight: 600; background: #243e68; } .tm.add { background: #243e68; }
.tm.dot::before, .tm.cur::before { content: ""; position: absolute; left: -12px; top: 18px; width: 5px; height: 5px; border-radius: 50%; background: #79a8e8; }
.tm.cur::before { top: 0; height: 42px; border-radius: 0 3px 3px 0; }
.side { width: 220px; background: #2f60ac; display: flex; flex-direction: column; border-right: 1px solid #2d589b; }
.sh { height: 63px; background: #3b70ba; display: flex; align-items: center; padding-left: 16px; color: #fff; flex: none; }
.av { position: relative; width: 32px; height: 32px; } .bd { position: absolute; right: -2px; bottom: -3px; } .av.big { width: 36px; height: 36px; margin-top: -2px; }
.ava { display: block; width: 32px; height: 32px; border-radius: 50%; color: #fff; font-weight: 600; font-size: 15px; line-height: 31px; padding-left: 6px; background: #dbe400; }
.ava.j { background: #cf007a; font-size: 14px; line-height: 29px; padding-left: 7px; }
.big .ava { width: 36px; height: 36px; font-size: 17px; line-height: 35px; padding-left: 8px; }
.who { margin-left: 8px; width: 128px; line-height: 18px; white-space: nowrap; } .who b { display: block; font-size: 14px; font-weight: 600; } .who span { font-size: 13.800px; color: #d6e3f5; }
.chs { height: 539px; overflow: hidden; }
.ch { height: 33px; display: flex; align-items: center; padding-left: 17px; color: #a5bcdf; font-size: 14px; white-space: nowrap; } .ch:first-child { margin-top: -16px; }
.ch svg, .ch em { width: 14px; height: 13px; margin-right: 8px; color: #8ba8d6; flex: none; } .ch.on svg { color: #5fd400; } .ch.aw svg { color: #d8cb4a; }
.ch em { width: 15px; height: 15px; margin-left: -1px; background: #7d9bd0; border-radius: 2px; color: #dce6f6; font: 10px/14px "Open Sans"; text-align: center; }
.ch.open { background: #4571b5; color: #fff; border-left: 3px solid #79a8e8; padding-left: 14px; }
.sw { height: 45px; background: #3b6fb4; color: #fff; font-weight: 600; font-size: 13.500px; line-height: 46px; padding-left: 23px; white-space: nowrap; }
.center { width: 739px; background: #f2f3f8; display: flex; flex-direction: column; }
.chead { height: 63px; border-bottom: 1px solid #c9cbd0; display: flex; align-items: center; padding-right: 16px; flex: none; }
.cinfo { flex: 1; padding-left: 16px; } .c1, .c2 { display: flex; align-items: center; height: 18px; } .c1 b { font-size: 14.200px; font-weight: 600; color: #3a3a41; margin: 0 9px 0 3px; } .c2 { padding-left: 2px; font-size: 12.300px; color: #6c6e75; } .c2 svg { color: #7cd936; margin-right: 6px; }
.circ { width: 30px; height: 30px; margin-left: 8px; border: 1px solid #d6d8dd; border-radius: 50%; color: #94969c; display: flex; align-items: center; justify-content: center; } .circ span { font-size: 15px; margin-top: -3px; }
.circ svg { margin-top: -2px; }
.scroll { height: 508px; display: flex; overflow: hidden; flex: none; } .feed { width: 731px; } .sbar { width: 8px; background: #d7d8dd; padding-top: 448px; } .sbar i { display: block; height: 60px; border-radius: 4px; background: #929498; }
.msg { display: flex; padding: 0 15px 0 37px; margin-bottom: 6px; } .msg .av { margin-top: 1px; } .mc { flex: 1; margin-left: 10px; }
.msg.first { margin-top: -4px; } .msg.first .av { margin-top: -22px; }
.nm { height: 24px; display: flex; align-items: center; padding-bottom: 1px; } .nm b { font-size: 14px; font-weight: 600; color: #3a3a41; } .nm time { margin-left: 7px; font-size: 12.600px; color: #8e9096; }
.msg p { height: 27px; line-height: 25px; padding-left: 7px; font-size: 13.500px; color: #46474d; white-space: nowrap; } .msg p.own { background: #e8e9ed; } .msg p.two { height: 49px; line-height: 22px; padding-top: 2px; } .msg a { color: #4578bf; }
.emoji { display: inline-block; vertical-align: -5px; }
.newm { height: 30px; margin: -6px 0 6px; display: flex; align-items: center; color: #f79b0a; font-size: 13px; gap: 13px; } .newm::before, .newm::after { content: ""; height: 1px; background: #f8b878; flex: 1; }
.write { height: 46px; margin: 0 15px; border: 1px solid #c6c8cd; border-radius: 2px; display: flex; align-items: center; color: #96989e; font-size: 14px; flex: none; } .write span { padding-left: 15px; flex: 1; } .clipb { width: 31px; } .smile { width: 42px; height: 100%; border-left: 1px solid #c6c8cd; display: flex; align-items: center; justify-content: center; }
.help { text-align: right; padding-right: 15px; color: #4a80cc; font-size: 13px; line-height: 26px; }
```
